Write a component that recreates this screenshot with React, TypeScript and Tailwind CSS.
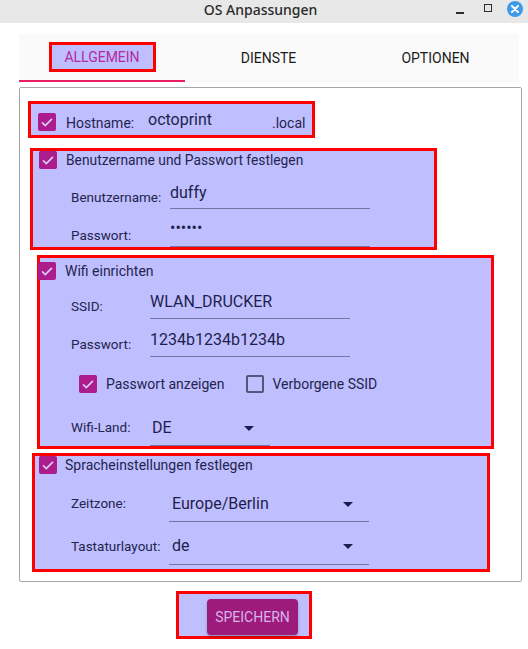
import React from 'react';

const ink = 'text-[#24244e]';
const box = 'border-[3px] border-[#ff0000] bg-[#bfbfff]';

function Check({ checked = true }: { checked?: boolean }) {
  if (!checked) {
    return <div className="w-[18px] h-[18px] shrink-0 rounded-[2px] border-2 border-[#55557c]" />;
  }
  return (
    <div className="w-[18px] h-[18px] shrink-0 rounded-[2px] bg-[#ad1c8c] flex items-center justify-center">
      <svg width="14" height="14" viewBox="0 0 24 24">
        <path d="M3.5 12.5l5.5 5.5L20.5 6.5" fill="none" stroke="#d6cbf5" strokeWidth="3" />
      </svg>
    </div>
  );
}

function Arrow() {
  return (
    <svg width="10" height="5" viewBox="0 0 10 5" className="shrink-0">
      <path d="M0 0h10L5 5z" fill="#1c1c50" />
    </svg>
  );
}

interface FieldProps {
  label: string;
  value: string;
  labelW: string;
  inputW: string;
  h: string;
  labelPb: string;
  inputPb: string;
  select?: boolean;
  valuePl?: string;
}

function Field({ label, value, labelW, inputW, h, labelPb, inputPb, select, valuePl = 'pl-0' }: FieldProps) {
  return (
    <div className={`flex items-end ${h}`}>
      <span className={`${labelW} ${labelPb} text-[13.5px] leading-[20px] shrink-0`}>{label}</span>
      <div className={`${inputW} ${inputPb} ${valuePl} border-b border-[#7474a6] flex items-center justify-between pr-[16px]`}>
        <span className="text-[16px] leading-[24px] text-[#1e1e4c]">{value}</span>
        {select && <Arrow />}
      </div>
    </div>
  );
}

export default function App() {
  return (
    <div className={`w-[528px] h-[649px] bg-white relative ${ink}`} style={{ fontFamily: 'Roboto, "Noto Sans", sans-serif' }}>
      {/* title bar */}
      <div className="h-[23px] bg-[#e8e8e8] flex items-start justify-center pr-[7px] pt-[1px] relative">
        <span className="text-[14px] leading-[18px] text-[#2a2a2a] font-medium" style={{ fontFamily: '"Noto Sans", sans-serif' }}>
          OS Anpassungen
        </span>
        <div className="absolute right-[5px] top-[1px] flex items-center">
          <div className="w-[8px] h-[2px] bg-[#2a2a2a] mt-[8px]" />
          <div className="w-[8px] h-[8px] border-[1.5px] border-[#2a2a2a] ml-[20px] mb-[2px]" />
          <div className="w-[16px] h-[16px] rounded-full bg-[#3d9be9] ml-[15px] flex items-center justify-center">
            <svg width="8" height="8" viewBox="0 0 8 8">
              <path d="M1 1l6 6M7 1L1 7" stroke="#fff" strokeWidth="2" strokeLinecap="round" />
            </svg>
          </div>
        </div>
      </div>

      {/* tabs */}
      <div className="mt-[11px] ml-[19px] w-[500px] h-[48px] bg-[#fafafa] flex text-[14px]">
        <div className="w-[166px] flex items-center justify-center border-b-2 border-[#e91e63]">
          <div className={`${box} w-[107px] h-[30px] flex items-center justify-center text-[#b42a9c]`}>ALLGEMEIN</div>
        </div>
        <div className="w-[167px] flex items-center justify-center text-[#1a1a1a]">DIENSTE</div>
        <div className="w-[167px] flex items-center justify-center text-[#1a1a1a]">OPTIONEN</div>
      </div>

      {/* content */}
      <div className="mt-[5px] ml-[19px] w-[503px] h-[495px] border border-[#a6a6a6] rounded-[2px] pt-[13px]">
        {/* hostname */}
        <div className={`${box} ml-[8px] w-[287px] h-[37px] flex items-end pl-[7px]`}>
          <div className="mb-[4px]"><Check /></div>
          <span className="ml-[10px] w-[82px] pb-[2px] text-[14px] leading-[20px]">Hostname:</span>
          <span className="w-[124px] pb-[3px] text-[16px] leading-[24px] text-[#1e1e4c]">octoprint</span>
          <span className="pb-[2px] text-[14px] leading-[20px]">.local</span>
        </div>

        {/* user */}
        <div className={`${box} mt-[10px] ml-[10px] w-[407px] h-[102px]`}>
          <div className="h-[18px] flex items-center gap-[9px] pl-[6px] text-[13.8px]">
            <Check />
            <span>Benutzername und Passwort festlegen</span>
          </div>
          <div className="pl-[38px]">
            <Field label="Benutzername:" value="duffy" labelW="w-[99px]" inputW="w-[200px]" h="h-[40px]" labelPb="pb-[2px]" inputPb="pb-[3px]" />
            <Field label="Passwort:" value="••••••" labelW="w-[99px]" inputW="w-[200px]" h="h-[38px]" labelPb="pb-[2px]" inputPb="pb-[6px]" />
          </div>
        </div>

        {/* wifi */}
        <div className={`${box} mt-[5px] ml-[17px] w-[457px] h-[194px]`}>
          <div className="h-[18px] mt-[4px] flex items-center gap-[9px] -ml-[2px] text-[14px]">
            <Check />
            <span>Wifi einrichten</span>
          </div>
          <div className="pl-[31px]">
            <Field label="SSID:" value="WLAN_DRUCKER" labelW="w-[79px]" inputW="w-[200px]" h="h-[39px]" labelPb="pb-[3px]" inputPb="pb-[4px]" />
            <Field label="Passwort:" value="1234b1234b1234b" labelW="w-[79px]" inputW="w-[200px]" h="h-[38px]" labelPb="pb-[3px]" inputPb="pb-[4px]" />
          </div>
          <div className="h-[54px] flex items-center pl-[39px] text-[14px]">
            <Check />
            <span className="ml-[9px]">Passwort anzeigen</span>
            <div className="ml-[21px]"><Check checked={false} /></div>
            <span className="ml-[9px]">Verborgene SSID</span>
          </div>
          <div className="pl-[31px]">
            <Field label="Wifi-Land:" value="DE" labelW="w-[79px]" inputW="w-[120px]" h="h-[35px]" labelPb="pb-[9px]" inputPb="pb-[5px]" select valuePl="pl-[2px]" />
          </div>
        </div>

        {/* language */}
        <div className={`${box} mt-[4px] ml-[12px] w-[458px] h-[119px]`}>
          <div className="h-[18px] flex items-center gap-[8px] pl-[4px] text-[14px]">
            <Check />
            <span>Spracheinstellungen festlegen</span>
          </div>
          <div className="pl-[36px]">
            <Field label="Zeitzone:" value="Europe/Berlin" labelW="w-[98px]" inputW="w-[200px]" h="h-[48px]" labelPb="pb-[9px]" inputPb="pb-[5px]" select valuePl="pl-[3px]" />
            <Field label="Tastaturlayout:" value="de" labelW="w-[98px]" inputW="w-[200px]" h="h-[43px]" labelPb="pb-[9px]" inputPb="pb-[6px]" select valuePl="pl-[3px]" />
          </div>
        </div>
      </div>

      {/* save */}
      <div className={`${box} mt-[9px] ml-[176px] w-[136px] h-[48px] pl-[28px] pt-[5px]`}>
        <button className="w-[91px] h-[36px] rounded-[4px] bg-[#9c1b7b] text-[#d7b4ea] text-[14px] shadow-[0_2px_3px_rgba(0,0,0,0.25)]">
          SPEICHERN
        </button>
      </div>
    </div>
  );
}
